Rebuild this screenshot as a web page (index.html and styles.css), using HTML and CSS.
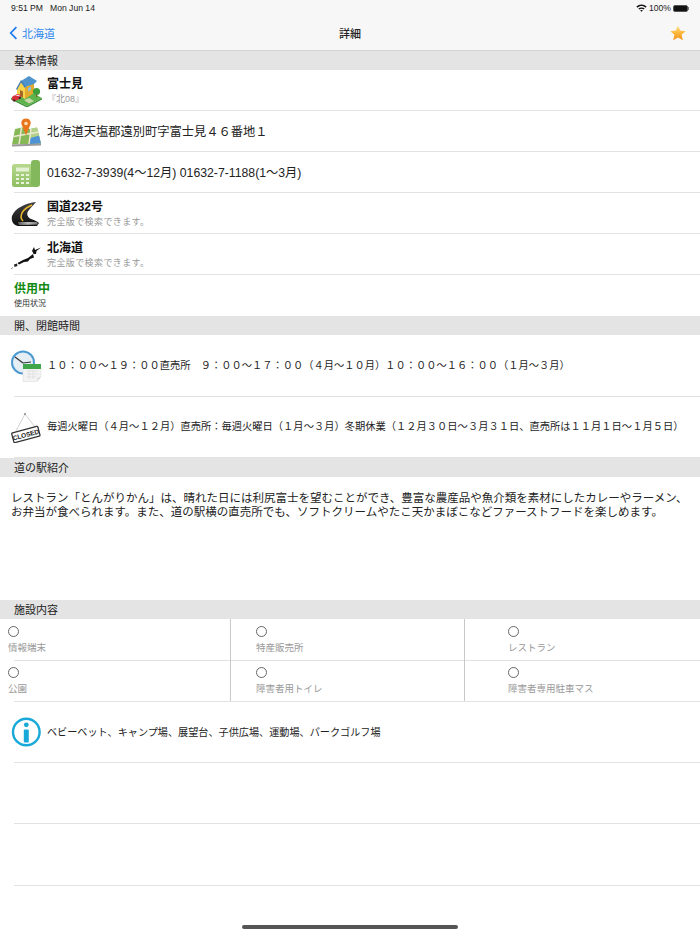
FILE: index.html
```html
<!DOCTYPE html>
<html lang="ja">
<head>
<meta charset="utf-8">
<title>詳細</title>
<link rel="stylesheet" href="styles.css">
</head>
<body>
<div class="page">
  <header class="topbar">
    <div class="status">
      <span class="status-left"><span>9:51 PM</span><span>Mon Jun 14</span></span>
      <span class="status-right">
        <svg class="wifi" viewBox="0 0 14 10" width="11" height="8"><path d="M0.5 3.2C4 -0.2 10 -0.2 13.5 3.2L12.2 4.6C9.3 1.9 4.7 1.9 1.8 4.6Z M3 5.7C5.1 3.8 8.9 3.8 11 5.7L9.7 7C8.3 5.8 5.7 5.8 4.3 7Z M5.4 8.1C6.3 7.4 7.7 7.4 8.6 8.1L7 9.8Z" fill="#111"/></svg>
        <span>100%</span>
        <span class="battery"><span class="battery-fill"></span></span>
        <span class="battery-nub"></span>
      </span>
    </div>
    <nav class="nav">
      <span class="back">
        <svg viewBox="0 0 10 16" width="9" height="14"><path d="M8.3 1.2 L1.8 8 L8.3 14.8" fill="none" stroke="#1f7cf0" stroke-width="2"/></svg>
        <span>北海道</span>
      </span>
      <span class="nav-title">詳細</span>
      <svg class="star" viewBox="0 0 20 20" width="16" height="16"><defs><linearGradient id="sg" x1="0" y1="0" x2="0" y2="1"><stop offset="0" stop-color="#fde08a"/><stop offset=".5" stop-color="#fbb73a"/><stop offset="1" stop-color="#f6921a"/></linearGradient></defs><path d="M10 .8 L12.8 7 L19.6 7.7 L14.5 12.2 L16 19 L10 15.5 L4 19 L5.5 12.2 L.4 7.7 L7.2 7Z" fill="url(#sg)"/></svg>
    </nav>
  </header>

  <h2 class="section">基本情報</h2>
  <div class="row row-41">
    <svg class="icon" viewBox="0 0 32 32" width="32" height="32">
      <path d="M1 23 L17 15 L32 23 L17 31Z" fill="#5db44b"/>
      <path d="M1 23 L17 31 L32 23 L32 24.500 L17 32.500 L1 24.500Z" fill="#3d8f35"/>
      <path d="M14 25 L19 23 L24 26 L19 28.500Z" fill="#c9d8a8"/>
      <path d="M15 12 L24 8 L24 18 L15 24Z" fill="#e3a92d"/>
      <path d="M7 13 L11 6 L15 12 L15 24 L7 19Z" fill="#f8d34c"/>
      <path d="M11 6 L19 1 L27 6 L24 9 L15 12Z" fill="#4f93cc"/>
      <path d="M6 14 L11 5 L16 12 L15 13 L11 7.500 L7 15Z" fill="#3f7fb5"/>
      <path d="M10 15 L13 16.500 L13 22.500 L10 21Z" fill="#a3662a"/>
      <path d="M18 13 L21 11.500 L21 15 L18 16.500Z" fill="#8cc0e4"/>
      <circle cx="26.500" cy="16.500" r="3.600" fill="#3f9e3c"/>
      <rect x="26" y="19.500" width="1.200" height="2.500" fill="#7a5326"/>
      <path d="M2 23 C2 21 4 20.500 5 20.500 L7 19 L10 19.500 L11 22 L10.500 23.500 L4 26.500 L2.500 25.500Z" fill="#d8303a"/>
      <path d="M5.500 20.700 L7.200 19.700 L9.300 20 L9.800 21.200Z" fill="#f2dede"/>
      <circle cx="4.200" cy="25.500" r="1.100" fill="#222"/>
      <circle cx="9.800" cy="23" r="1.100" fill="#222"/>
    </svg>
    <div class="stack"><strong class="title">富士見</strong><span class="sub">『北08』</span></div>
  </div>
  <div class="row row-41">
    <svg class="icon" viewBox="0 0 32 32" width="32" height="32">
      <path d="M5 13 L12 11.500 L20 13 L27 11.500 L31 27.500 L2 28.500Z" fill="#86b857"/>
      <path d="M20 22 L29 19.500 L31 27.500 L20 28Z" fill="#4d93d6"/>
      <path d="M20 13 L27 11.500 L29 19.500 L20 22Z" fill="#b2d28c"/>
      <path d="M3.500 20.500 L29 16 M11.500 11.500 L9 28.500 M21 13 L19 28" stroke="#ece8d2" stroke-width="1.500" fill="none"/>
      <path d="M2 28.500 L31 27.500 L31 29.500 L2 30.500Z" fill="#9a9a9a"/>
      <path d="M16 2.500 C12 2.500 10.800 5.800 11.600 8.500 L16 19.500 L20.400 8.500 C21.200 5.800 20 2.500 16 2.500Z" fill="#e9761c"/>
      <circle cx="16" cy="7.500" r="1.800" fill="#fbe0c0"/>
    </svg>
    <span class="text-14">北海道天塩郡遠別町字富士見４６番地１</span>
  </div>
  <div class="row row-41">
    <svg class="icon" viewBox="0 0 32 32" width="32" height="32">
      <defs><linearGradient id="pg" x1="0" y1="0" x2="0" y2="1"><stop offset="0" stop-color="#b7d98e"/><stop offset="1" stop-color="#8dbd62"/></linearGradient></defs>
      <rect x="2" y="7" width="22" height="23" rx="2.500" fill="url(#pg)"/>
      <rect x="21" y="3" width="9" height="27" rx="3" fill="#84b85c"/>
      <rect x="6" y="10.500" width="13" height="4" fill="#e3f0d2"/>
      <path d="M6 17h3v2H6zM11 17h3v2h-3zM16 17h3v2h-3zM6 21h3v2H6zM11 21h3v2h-3zM16 21h3v2h-3zM6 25h3v2H6zM11 25h3v2h-3zM16 25h3v2h-3z" fill="#e9f3dc"/>
    </svg>
    <span class="text-14">01632-7-3939(4～12月) 01632-7-1188(1～3月)</span>
  </div>
  <div class="row row-41">
    <svg class="icon" viewBox="0 0 32 32" width="32" height="32">
      <defs><linearGradient id="rg" x1="0" y1="0" x2="0" y2="1"><stop offset="0" stop-color="#444"/><stop offset=".6" stop-color="#222"/><stop offset="1" stop-color="#111"/></linearGradient><linearGradient id="rb" x1="0" y1="0" x2="1" y2="0"><stop offset="0" stop-color="#555"/><stop offset=".5" stop-color="#bbb"/><stop offset="1" stop-color="#777"/></linearGradient></defs>
      <path d="M26 4 C16 5 5 10 2 18 C1 23 3 27 8 28 L27 28 L29 25 C27 23 24 22 21 21 C17 19 16 15 19 12 C21 9 24 7 26 4Z" fill="url(#rg)"/>
      <path d="M22 7 C15 10 11 14 11 19 C11 21 12 22 13 23" stroke="#e9b62c" stroke-width="1.600" fill="none"/>
      <path d="M8 24 L27 24 L28 26.500 L9 27Z" fill="url(#rb)"/>
    </svg>
    <div class="stack"><strong class="title">国道232号</strong><span class="sub sub-wide">完全版で検索できます。</span></div>
  </div>
  <div class="row row-41">
    <svg class="icon" viewBox="0 0 32 32" width="32" height="32">
      <path d="M22 12 L24 8 L25 11 L31 8.500 L26.500 12 L26 15 L23.500 15 L23 13.500Z" fill="#111"/>
      <path d="M23 15 L24 18.500 L20 20 L18 22.500 L14 23 L9 25.500 L7.500 24 L13 21 L18 19 L20.500 17Z" fill="#111"/>
      <path d="M4 25.500 L7 24.500 L7.500 27 L4.500 28Z" fill="#222"/>
      <path d="M1 30 L3 28.500" stroke="#666" stroke-width=".7"/>
    </svg>
    <div class="stack"><strong class="title">北海道</strong><span class="sub sub-wide">完全版で検索できます。</span></div>
  </div>
  <div class="row-status">
    <strong class="status-value">供用中</strong>
    <span class="status-label">使用状況</span>
  </div>

  <h2 class="section">開、閉館時間</h2>
  <div class="row row-62">
    <svg class="icon" viewBox="0 0 32 32" width="32" height="32">
      <circle cx="13" cy="12.500" r="11" fill="#e6eef5" stroke="#4d9ad1" stroke-width="2"/>
      <path d="M13 13 L5 7 M13 13 L21 12" stroke="#333" stroke-width="1.200"/>
      <path d="M13 18 H31 V27 L27 31.500 H13Z" fill="#f3f3f3" stroke="#d8d8d8" stroke-width=".5"/>
      <path d="M27 31.500 L27.500 27.500 L31 27Z" fill="#ddd"/>
      <rect x="13" y="14" width="18" height="5" fill="#3fa64a"/>
      <path d="M17 21H28M17 24H28M17 27H26M19 20V29M23 20V29" stroke="#dcdcdc" stroke-width=".7"/>
    </svg>
    <span class="text-hours">１０：００～１９：００直売所　９：００～１７：００（４月～１０月）１０：００～１６：００（１月～３月）</span>
  </div>
  <div class="row row-62">
    <svg class="icon" viewBox="0 0 32 32" width="32" height="32">
      <path d="M6 20 L15 3 L25 16" fill="none" stroke="#bbb" stroke-width=".7"/>
      <circle cx="15" cy="3" r="1" fill="#888"/>
      <g transform="rotate(-15 16 24)"><rect x="2.500" y="18.500" width="27" height="10" rx="1" fill="#fff" stroke="#333" stroke-width="1.300"/><text class="closed" x="16" y="26" text-anchor="middle">CLOSED</text></g>
    </svg>
    <span class="text-closed">毎週火曜日（４月～１２月）直売所：毎週火曜日（１月～３月）冬期休業（１２月３０日～３月３１日、直売所は１１月１日～１月５日）</span>
  </div>

  <h2 class="section">道の駅紹介</h2>
  <p class="intro">レストラン「とんがりかん」は、晴れた日には利尻富士を望むことができ、豊富な農産品や魚介類を素材にしたカレーやラーメン、お弁当が食べられます。また、道の駅横の直売所でも、ソフトクリームやたこ天かまぼこなどファーストフードを楽しめます。</p>

  <h2 class="section">施設内容</h2>
  <div class="facilities">
    <div class="facility"><span class="radio"></span><span class="facility-name">情報端末</span></div>
    <div class="facility"><span class="radio"></span><span class="facility-name">特産販売所</span></div>
    <div class="facility"><span class="radio"></span><span class="facility-name">レストラン</span></div>
    <div class="facility"><span class="radio"></span><span class="facility-name">公園</span></div>
    <div class="facility"><span class="radio"></span><span class="facility-name">障害者用トイレ</span></div>
    <div class="facility"><span class="radio"></span><span class="facility-name">障害者専用駐車マス</span></div>
  </div>
  <div class="row row-62">
    <svg class="icon" viewBox="0 0 32 32" width="32" height="32">
      <circle cx="16.300" cy="16" r="13.300" fill="#fff" stroke="#18a9d8" stroke-width="2.400"/>
      <circle cx="16.300" cy="8.800" r="2.400" fill="#18a9d8"/>
      <rect x="13.800" y="13.500" width="5" height="13" rx="1" fill="#18a9d8"/>
    </svg>
    <span class="text-note">ベビーベット、キャンプ場、展望台、子供広場、運動場、パークゴルフ場</span>
  </div>
  <div class="row row-62"></div>
  <div class="row row-62"></div>
  <div class="home-wrap"><span class="home"></span></div>
</div>
</body>
</html>
```
FILE: styles.css
```css
* { box-sizing: border-box; }
html, body { margin: 0; padding: 0; background: #fff; }
body { font-family: "Liberation Sans", "Noto Sans CJK JP", sans-serif; color: #111; }
.page { width: 700px; height: 934px; overflow: hidden; display: flex; flex-direction: column; }
.topbar { height: 51px; background: #f7f7f7; border-bottom: 1px solid #d4d4d4; flex: none; }
.status { height: 16px; padding: 0 11px 0 11px; display: flex; justify-content: space-between; align-items: center; font-size: 8.6px; color: #222; }
.status-left { display: flex; gap: 7px; }
.status-right { display: flex; align-items: center; gap: 2px; }
.battery { width: 15px; height: 7px; background: #111; border: 1px solid #555; border-radius: 2px; display: inline-block; }
.battery-fill { display: block; }
.battery-nub { width: 1px; height: 3px; background: #777; margin-left: -2px; }
.nav { height: 34px; display: flex; align-items: center; justify-content: space-between; padding: 0 14px 0 9px; position: relative; }
.back { display: flex; align-items: center; gap: 4px; color: #2c86ee; font-size: 11px; }
.nav-title { position: absolute; left: 0; right: 0; text-align: center; font-size: 11px; font-weight: 500; color: #222; }
.section { margin: 0; height: 19px; flex: none; background: #e4e4e4; padding: 0 0 0 14px; font-size: 11px; line-height: 21px; font-weight: 400; color: #222; }
.row { flex: none; display: flex; align-items: center; gap: 5px; padding-left: 10px; position: relative; }
.row::after { content: ""; position: absolute; left: 14px; right: 0; bottom: 0; height: 1px; background: #e2e2e2; }
.row-41 { height: 41px; }
.row-62 { height: 61.5px; }
.icon { flex: none; }
.stack { display: flex; flex-direction: column; gap: 1px; padding-top: 1px; }
.title { font-size: 12px; line-height: 15px; font-weight: 700; color: #111; }
.sub { font-size: 9px; line-height: 12px; color: #999; }
.sub-wide { letter-spacing: .4px; }
.text-14 { font-size: 12.25px; color: #222; margin-bottom: 2px; }
.row-status { height: 41px; flex: none; padding: 7px 0 0 14px; display: flex; flex-direction: column; gap: 2px; }
.status-value { font-size: 12px; line-height: 15px; color: #128a12; }
.status-label { font-size: 8px; line-height: 10px; color: #333; }
.text-hours { font-size: 10.25px; color: #222; margin-bottom: 3px; }
.text-closed { font-size: 10.28px; color: #222; margin-bottom: 4px; }
.closed { font-family: "Liberation Sans", sans-serif; font-size: 6.5px; font-weight: 700; fill: #222; }
.intro { margin: 0; height: 123px; flex: none; padding: 14px 11px 0; font-size: 11.5px; line-height: 14px; color: #222; }
.facilities { flex: none; display: grid; grid-template-columns: 231px 234px 235px; grid-auto-rows: 41px; }
.facility { position: relative; display: flex; flex-direction: column; align-items: flex-start; gap: 5px; padding: 7px 0 0 8px; }
.facility:nth-child(3n+2) { padding-left: 25px; }
.facility:nth-child(3n) { padding-left: 43px; }
.facility:nth-child(3n+1)::before, .facility:nth-child(3n+2)::before { content: ""; position: absolute; top: 0; bottom: 0; right: 0; width: 1px; background: #c9c9c9; }
.facility::after { content: ""; position: absolute; left: 0; right: 0; bottom: -1px; height: 1px; background: #e2e2e2; }
.facility:nth-child(3n+1)::after { left: 14px; }
.radio { width: 11px; height: 11px; border: 1px solid #666; border-radius: 50%; }
.facility-name { font-size: 9.5px; line-height: 12px; color: #999; }
.text-note { font-size: 10.15px; color: #222; }
.home-wrap { flex: 1; display: flex; align-items: flex-end; justify-content: center; padding-bottom: 5px; }
.home { width: 216px; height: 4px; background: #555; border-radius: 2px; }
```
